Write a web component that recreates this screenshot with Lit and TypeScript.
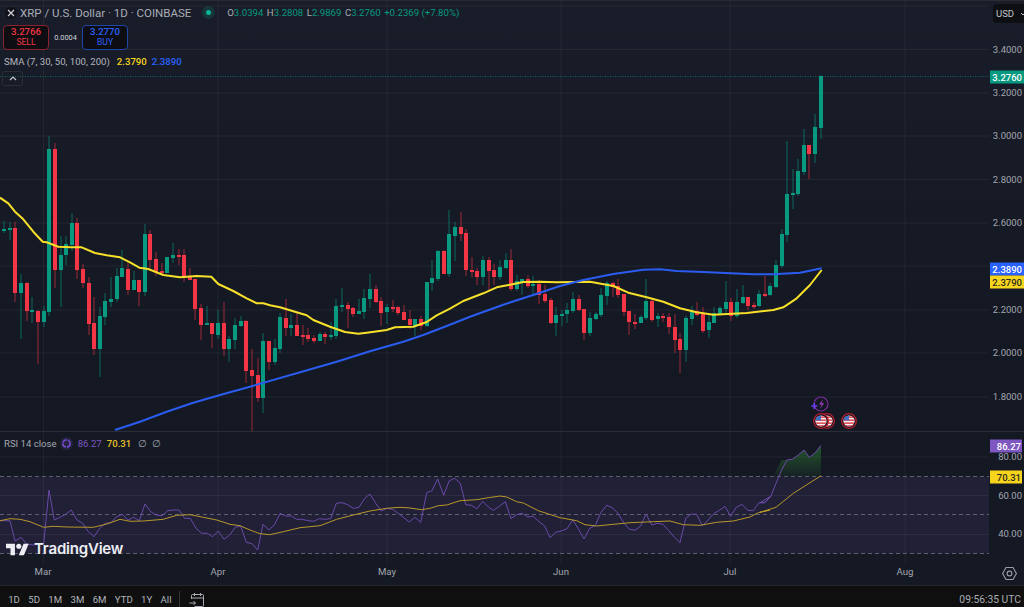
import { LitElement, html, css, svg } from "lit";
import { customElement } from "lit/decorators.js";

type C = [number, number, number, number, number, number];
// x, body top, body bottom, high, low, up(1)/down(0)
const CANDLES: C[] = [
[4,229,230,221,233,1],[10,228,229,222,240,1],[15,228,293,222,302,0],[21,283,293,274,339,1],[27,283,311,282,321,0],[32,310,311,297,323,1],[38,311,322,310,364,0],[44,311,322,306,327,1],[49,149,312,136,316,1],[55,149,270,143,288,0],[61,255,270,236,307,1],[66,244,255,236,265,1],[72,223,245,213,251,1],[77,223,270,218,279,0],[83,269,283,264,288,0],[89,283,324,277,335,0],[94,323,349,297,355,0],[100,316,349,307,377,1],[105,301,317,293,325,1],[111,299,302,277,307,1],[117,276,299,268,302,1],[122,268,277,250,277,1],[128,269,290,263,295,0],[134,280,290,271,290,1],[139,280,292,280,306,0],[145,234,292,224,296,1],[150,234,260,230,268,0],[156,259,272,252,276,0],[162,271,273,263,274,0],[167,257,273,257,273,1],[173,255,258,243,263,1],[179,255,256,249,265,0],[184,255,278,249,282,0],[190,277,280,268,280,0],[195,279,309,279,320,0],[201,308,325,304,340,0],[207,323,324,306,324,1],[212,323,334,323,348,0],[218,323,335,310,339,1],[224,323,349,302,356,0],[229,339,349,336,362,1],[235,325,340,318,349,1],[241,321,326,316,327,1],[246,321,371,320,383,0],[252,370,376,349,431,0],[258,375,398,358,402,0],[263,341,398,333,413,1],[269,341,362,341,370,0],
[275,348,362,339,365,1],[280,317,349,313,353,1],[286,318,328,299,336,0],[291,325,328,314,336,1],[297,325,336,313,336,0],[303,335,336,325,345,0],[308,335,339,328,342,0],[314,338,341,335,343,0],[320,334,341,332,341,1],[325,334,337,332,344,0],[331,335,337,322,340,1],[336,306,336,299,339,1],[342,305,307,288,312,1],[348,305,309,302,328,0],[353,308,314,307,317,0],[359,311,314,299,314,1],[364,298,312,289,319,1],[370,289,299,274,308,1],[376,289,302,285,303,0],[381,301,313,297,326,0],[387,307,312,304,324,1],[393,307,308,300,312,0],[398,307,313,306,315,0],[404,312,320,305,320,0],[410,319,325,310,329,0],[415,319,326,319,336,1],[421,319,326,316,330,0],[427,282,326,282,327,1],[432,278,283,260,291,1],[438,251,279,250,281,1],[444,251,274,250,274,0],[449,234,274,210,277,1],[455,227,236,222,261,1],[461,227,234,212,241,0],[466,233,270,229,276,0],[472,270,271,257,277,0],[477,271,277,268,285,0],[483,260,277,256,285,1],[489,260,271,257,291,0],[494,270,277,264,285,0],[500,267,277,260,280,1],[506,260,268,253,269,1],[511,260,289,249,291,0],[517,281,289,275,291,1],[522,279,282,279,295,1],[528,279,286,275,288,0],[533,284,286,276,294,1],[539,284,295,280,304,0],
[545,294,301,285,303,0],[551,300,323,298,324,0],[556,315,323,307,336,1],[562,314,315,310,326,1],[567,310,314,303,323,1],[573,299,311,292,313,1],[579,299,310,295,311,0],[584,309,333,309,340,0],[590,318,333,312,336,1],[596,314,319,312,320,1],[601,295,315,288,317,1],[607,283,296,281,305,1],[613,283,287,282,297,0],[618,286,295,279,298,0],[624,294,312,294,316,0],[629,311,322,311,335,0],[635,322,323,314,329,0],[641,317,323,315,323,1],[646,301,318,279,320,1],[652,301,320,298,322,0],[658,316,319,313,327,1],[663,316,318,313,322,0],[669,317,327,313,334,0],[675,327,340,314,353,0],[680,339,350,333,373,0],[686,318,350,316,362,1],[692,311,319,306,325,1],[697,311,315,302,316,0],[703,313,331,307,333,0],[709,322,330,313,338,1],[714,313,323,307,323,1],[720,308,314,306,315,1],[726,302,309,281,315,1],[731,302,316,298,321,0],[737,302,316,289,318,1],[743,297,303,285,304,1],[748,297,306,297,310,0],[754,305,306,302,309,0],[759,294,306,290,307,1],[765,294,295,276,297,0],[770,286,295,283,296,1],[776,265,287,260,288,1],[782,234,266,229,268,1],[787,194,235,141,242,1],[793,193,195,169,209,1],[798,171,194,159,196,1],[804,145,172,129,175,1],[809,145,154,145,179,0],[815,127,154,114,163,1],[821,76,128,75,139,1],
];

const conv = (pts: number[][], x0: number, y0: number) => pts.map(([x, y]) => [x / 3 + x0, y / 3 + y0]);
const toPath = (pts: number[][]) => pts.map(([x, y]) => `${x.toFixed(1)},${y.toFixed(1)}`).join(" ");

const SMA_Y = toPath([
  ...conv([[0,203],[25,220],[45,245],[70,268],[100,305],[128,335],[140,337],[175,350],[215,352],[245,352],[285,369],[320,376],[360,382],[390,397],[418,413],[445,417],[490,435],[540,442],[590,438],[634,440],[655,462],[700,483],[740,505],[770,520],[790,520]], 0, 130),
  ...conv([[0,316],[30,322],[70,334],[110,346],[130,360],[180,380],[225,396],[265,401],[290,398],[350,390],[375,382],[430,380],[470,366],[500,346],[540,326],[580,303],[640,280],[680,262],[720,254],[760,246]], 270, 200),
  ...conv([[0,245],[50,247],[150,245],[220,258],[265,278],[320,292],[370,305],[420,325],[470,337],[520,344],[620,339],[700,330],[730,322],[770,295],[810,255],[845,210]], 540, 200),
]);
const SMA_B = toPath([
  ...conv([[345,900],[420,875],[500,845],[580,818],[660,795],[750,770]], 0, 130),
  ...conv([[200,485],[300,454],[400,425],[460,405],[530,378],[600,350],[700,314]], 270, 200),
  ...conv([[0,278],[60,258],[130,240],[220,222],[310,209],[360,208],[410,213],[490,216],[640,223],[700,223],[780,218],[845,205]], 540, 200),
]);
const RSI_LINE = toPath([
  ...conv([[0,272],[30,272],[45,333],[63,322],[80,342],[100,345],[131,340],[147,180],[163,270],[180,262],[197,253],[214,240],[231,270],[248,280],[265,305],[282,320],[299,295],[316,280],[333,278],[350,260],[367,253],[384,270],[401,262],[418,272],[435,222],[452,245],[469,255],[486,257],[503,242],[520,240],[537,240],[554,265],[571,265],[588,295],[605,310],[622,310],[638,320],[655,303],[672,328],[689,315],[706,292],[722,288],[739,337],[756,341],[773,360],[789,282],[806,300],[823,285],[840,250],[857,258],[874,258],[890,268],[907,268],[924,272],[941,274],[958,266],[975,268],[992,266],[1009,220],[1026,218],[1043,224],[1060,235],[1077,232],[1094,205],[1110,192],[1127,220],[1144,243],[1161,235],[1178,238]], 0, 430),
  ...conv([[0,254],[28,276],[45,262],[62,277],[80,188],[96,182],[113,147],[131,196],[148,152],[164,145],[181,160],[197,224],[214,226],[231,236],[248,214],[265,231],[281,241],[299,228],[316,215],[333,266],[350,254],[366,250],[383,261],[400,259],[417,275],[434,288],[450,323],[467,307],[484,303],[501,296],[518,270],[535,296],[552,327],[569,295],[586,287],[603,247],[620,226],[637,233],[654,250],[671,278],[688,298],[705,301],[722,288],[738,252],[755,285],[772,280],[789,283],[806,302],[823,321],[840,338],[857,265],[874,252],[890,253],[907,287],[924,270],[941,251],[958,241],[975,229],[992,259],[1009,232],[1026,223],[1043,241],[1060,242],[1077,218],[1094,218],[1110,200]], 400, 430),
  ...conv([[0,368],[14,368],[32,350],[48,310],[65,270],[81,240],[97,238],[115,225],[132,210],[148,232],[166,218],[183,196]], 760, 380),
]);
const RSI_MA = toPath([
  ...conv([[0,272],[30,266],[60,268],[90,275],[131,292],[160,289],[200,291],[280,292],[320,282],[360,268],[390,274],[430,273],[490,268],[530,256],[570,254],[610,262],[650,270],[690,283],[720,287],[750,300],[780,311],[810,314],[850,305],[900,293],[960,287],[1010,268],[1060,255],[1110,243],[1160,235]], 0, 430),
  ...conv([[0,232],[30,234],[65,239],[90,235],[115,227],[140,225],[180,212],[230,209],[265,203],[300,198],[320,201],[350,215],[370,219],[415,242],[480,263],[530,272],[555,284],[590,288],[640,283],[690,278],[760,275],[810,273],[850,284],[900,286],[950,277],[1000,273],[1050,261],[1075,248],[1110,240]], 400, 430),
  ...conv([[0,397],[48,382],[100,340],[183,287]], 760, 380),
]);
const OB_FILL = "773.5,476.5 776,470.5 781.7,460 787,460 792,459 798.3,455 804,450 809.3,457.3 815.3,452.7 821,445.3 821,476.5";

const V_GRID = [43.5, 218, 387, 561, 730, 905];
const H_MAIN = [6, 49.5, 93, 136, 179.5, 223, 266, 310, 353, 397];
const H_RSI = [457, 495.5, 534.5];

const PRICE_LABELS: [string, number][] = [["3.4000",49.5],["3.2000",93],["3.0000",136],["2.8000",179.5],["2.6000",223],["2.2000",310],["2.0000",353],["1.8000",397]];
const PRICE_TAGS: [string, number, string][] = [["3.2760",77,"green"],["2.3890",269,"blue"],["2.3790",282,"yellow"]];
const RSI_LABELS: [string, number][] = [["80.00",457],["60.00",495.5],["40.00",534]];
const RSI_TAGS: [string, number, string][] = [["86.27",445.5,"purple"],["70.31",476.5,"yellow"]];
const MONTHS: [string, number][] = [["Mar",43],["Apr",218],["May",387],["Jun",561],["Jul",730],["Aug",905]];
const RANGES = ["1D","5D","1M","3M","6M","YTD","1Y","All"];

const flag = (cx: number, cy: number, id: string) => svg`
  <circle cx=${cx} cy=${cy} r="7.3" fill="#16121c" stroke="#b3202f" stroke-width="1.3"/>
  <clipPath id=${id}><circle cx=${cx} cy=${cy} r="5.6"/></clipPath>
  <g clip-path="url(#${id})">
    <rect x=${cx-6} y=${cy-6} width="12" height="12" fill="#f2f2f2"/>
    <rect x=${cx-6} y=${cy-4.6} width="12" height="1.5" fill="#e0434f"/>
    <rect x=${cx-6} y=${cy-1.6} width="12" height="1.5" fill="#e0434f"/>
    <rect x=${cx-6} y=${cy+1.4} width="12" height="1.5" fill="#e0434f"/>
    <rect x=${cx-6} y=${cy+4.2} width="12" height="1.5" fill="#e0434f"/>
    <rect x=${cx-6} y=${cy-6} width="6" height="5.4" fill="#3f6fc4"/>
  </g>`;

@customElement("app-root")
export class AppRoot extends LitElement {
  static styles = css`
    :host { display: block; position: relative; width: 1024px; height: 607px; overflow: hidden; background: #0f0f0f;
      font-family: Roboto, "Liberation Sans", sans-serif; color: #b2b5be; }
    .chart { position: relative; height: 585px; border-top: 1px solid #2a2b30; box-sizing: border-box;
      background: linear-gradient(180deg, #191d29 0%, #141823 60%, #151924 100%);
      display: flex; flex-direction: column; }
    .pane { display: flex; flex: none; position: relative; }
    .pane svg { display: block; flex: none; }
    .top { height: 430px; border-bottom: 1px solid #2a2e39; }
    .rsi { flex: 1; min-height: 0; }
    .timeaxis { height: 21px; flex: none; position: relative; }
    .scale { position: relative; flex: 1; font-size: 9.5px; }
    .lab { position: absolute; right: 2px; transform: translateY(-50%); line-height: 12px; color: #a3a6af; }
    .tag { position: absolute; left: 1px; right: 0; transform: translateY(-50%); height: 13px; line-height: 13px;
      text-align: right; padding-right: 2px; font-weight: 500; color: #fff; }
    .tag.green { background: #089981; }
    .tag.blue { background: #2962ff; }
    .tag.yellow { background: #f7d51d; color: #2a2a20; }
    .tag.purple { background: #7e57c2; right: 2px; padding-right: 1px; }
    .rsi .tag.yellow { right: 2px; padding-right: 1px; }
    .usd { position: absolute; top: 3px; right: 0; width: 31px; height: 19px; box-sizing: border-box; background: #0e0f12;
      border-radius: 4px 0 0 4px; display: flex; align-items: center; gap: 6px; padding-left: 3px; font-size: 9.5px; color: #c3c6ce; }
    .legend { position: absolute; left: 0; top: 0; display: flex; flex-direction: column; align-items: flex-start; }
    .title { display: flex; align-items: center; height: 25px; padding-left: 5px; font-size: 11.5px; color: #a9acb5; white-space: nowrap; }
    .xicon { width: 12px; height: 12px; margin-right: 3px; flex: none; }
    .dot { width: 13px; height: 13px; border-radius: 50%; background: rgba(8,153,129,.2); margin: 0 12px 0 11px; display: flex;
      align-items: center; justify-content: center; flex: none; }
    .dot i { width: 5px; height: 5px; border-radius: 50%; background: #08b598; display: block; }
    .ohlc { font-size: 9.6px; display: flex; gap: 3.5px; }
    .ohlc b { font-weight: 400; color: #089981; }
    .trade { display: flex; align-items: center; padding-left: 3px; height: 26px; margin-top: -1px; }
    .box { width: 46px; height: 25px; box-sizing: border-box; border-radius: 4px; background: #0e0e12; border: 1px solid; display: flex;
      flex-direction: column; align-items: center; justify-content: center; line-height: 11px; }
    .box .p { font-size: 9.6px; font-weight: 500; }
    .box .s { font-size: 8.6px; }
    .sell { border-color: #8a2231; color: #f23645; }
    .buy { border-color: #1f47a8; color: #2962ff; }
    .spread { width: 33px; text-align: center; font-size: 7.4px; color: #d1d4dc; }
    .sma { display: flex; gap: 5px; padding-left: 4px; height: 15px; align-items: center; margin-top: 4px; font-size: 9.6px; white-space: nowrap; }
    .sma .y { color: #f7d51d; font-weight: 500; }
    .sma .b { color: #2962ff; font-weight: 500; }
    .sma span:first-child { margin-right: 2px; }
    .collapse { width: 21px; height: 15px; margin: 2px 0 0 2px; box-sizing: border-box; border: 1px solid #2a2e39; border-radius: 3px;
      display: flex; align-items: center; justify-content: center; }
    .rsilegend { position: absolute; left: 4px; top: 5px; display: flex; align-items: center; font-size: 9.6px; white-space: nowrap; }
    .rsilegend .n { margin-right: 3px; color: #a3a6af; }
    .ring { width: 13px; height: 13px; margin-right: 5px; flex: none; }
    .v1 { color: #7e57c2; margin-right: 5px; }
    .v2 { color: #e6c229; font-weight: 500; margin-right: 7px; }
    .v3 { margin-right: 5px; color: #a3a6af; }
    .brand { position: absolute; left: 6px; bottom: 7px; display: flex; align-items: center; gap: 5px; color: #eceef2;
      font-family: Inter, Roboto, sans-serif; font-weight: 600; font-size: 15px; letter-spacing: -.2px; line-height: 16px; }
    .month { position: absolute; top: 2px; transform: translateX(-50%); font-size: 9.6px; color: #a3a6af; }
    .gear { position: absolute; right: 6px; top: 1px; width: 17px; height: 17px; }
    .bottom { height: 22px; box-sizing: border-box; display: flex; align-items: flex-end; padding: 0 3px 0 4px; font-size: 9.6px; color: #b2b5be;
      border-top: 1px solid #26272b; background: #0f0f0f; }
    .ranges { display: flex; }
    .ranges span { display: block; padding: 0 4.2px 1px; text-align: center; line-height: 13px; white-space: nowrap; }
    .sep { width: 1px; height: 16px; background: #34353a; margin-left: 3px; }
    .cal { width: 16px; height: 15px; margin-left: 9px; flex: none; }
    .clock { margin-left: auto; line-height: 13px; padding-bottom: 1px; font-size: 10.3px; color: #a9acb5; }
  `;

  private candles() {
    return CANDLES.map(([x, t, b, h, l, up]) => {
      const col = up ? "#089981" : "#f23645";
      return svg`<rect x=${x - 0.5} y=${h} width="1" height=${l - h} fill=${col} opacity=".62"/>
        <rect x=${x - 2} y=${t} width="4" height=${b - t + (b - t < 2 ? 1 : 0)} fill=${col}/>`;
    });
  }

  private scale(labels: [string, number][], tags: [string, number, string][], off: number) {
    return html`
      ${labels.map(([t, y]) => html`<div class="lab" style="top:${y - off}px">${t}</div>`)}
      ${tags.map(([t, y, c]) => html`<div class="tag ${c}" style="top:${y - off}px">${t}</div>`)}`;
  }

  render() {
    return html`
      <div class="chart">
        <div class="pane top">
          <svg width="989" height="430" viewBox="0 1 989 430">
            ${H_MAIN.map((y) => svg`<line x1="0" x2="989" y1=${y} y2=${y} stroke="#ffffff" stroke-opacity=".055"/>`)}
            ${V_GRID.map((x) => svg`<line x1=${x} x2=${x} y1="0" y2="431" stroke="#ffffff" stroke-opacity=".05"/>`)}
            <line x1="0" x2="989" y1="76.5" y2="76.5" stroke="#089981" stroke-opacity=".6" stroke-dasharray="1 1.5"/>
            ${this.candles()}
            <polyline points=${SMA_Y} fill="none" stroke="#f7e02a" stroke-width="2" stroke-linejoin="round"/>
            <polyline points=${SMA_B} fill="none" stroke="#2a5cf0" stroke-width="2" stroke-linejoin="round"/>
            <circle cx="821" cy="404" r="7" fill="none" stroke="#7b2a9c" stroke-width="1.2"/>
            <path d="M823 399.5l-4 5h2.6l-1.6 4 4.2-5.2h-2.6z" fill="#9c3cc4"/>
            <path d="M813.5 403v2.2h-2.2v1.6h2.2v2.2h1.6v-2.2h2.2v-1.6h-2.2V403z" fill="#6a3df0"/>
            ${flag(827, 421, "f1")}
            ${flag(821, 421, "f2")}
            ${flag(849, 421, "f3")}
          </svg>
          <div class="scale">
            ${this.scale(PRICE_LABELS, PRICE_TAGS, 1)}
            <div class="usd">USD
              <svg width="6" height="4" viewBox="0 0 6 4"><path d="M1 1l2 2 2-2" fill="none" stroke="#c3c6ce" stroke-width="1"/></svg>
            </div>
          </div>
        </div>
        <div class="pane rsi">
          <svg width="989" height="132" viewBox="0 432 989 132">
            <rect x="0" y="476.5" width="989" height="77" fill="#7e57c2" fill-opacity=".12"/>
            <defs><linearGradient id="ob" x1="0" y1="0" x2="0" y2="1">
              <stop offset="0" stop-color="#2e7d32" stop-opacity=".6"/><stop offset="1" stop-color="#2e7d32" stop-opacity=".08"/>
            </linearGradient></defs>
            ${H_RSI.map((y) => svg`<line x1="0" x2="989" y1=${y} y2=${y} stroke="#ffffff" stroke-opacity=".055"/>`)}
            ${V_GRID.map((x) => svg`<line x1=${x} x2=${x} y1="432" y2="564" stroke="#ffffff" stroke-opacity=".05"/>`)}
            ${[476.5, 514.5, 553.5].map((y) => svg`<line x1="0" x2="989" y1=${y} y2=${y} stroke="#787b86" stroke-opacity=".7" stroke-width="1" stroke-dasharray="4 3"/>`)}
            <polygon points=${OB_FILL} fill="url(#ob)"/>
            <polyline points=${RSI_LINE} fill="none" stroke="#6a4aa8" stroke-width="1" stroke-linejoin="round"/>
            <polyline points=${RSI_MA} fill="none" stroke="#b8982a" stroke-width="1" stroke-linejoin="round"/>
          </svg>
          <div class="scale">
            ${this.scale(RSI_LABELS, RSI_TAGS, 432)}
          </div>
          <div class="rsilegend">
            <span class="n">RSI 14 close</span>
            <svg class="ring" viewBox="0 0 13 13"><circle cx="6.5" cy="6.5" r="6.5" fill="#7e57c2" fill-opacity=".18"/><circle cx="6.5" cy="6.5" r="3.6" fill="none" stroke="#7a4fe0" stroke-width="1.4" stroke-dasharray="5 1"/></svg>
            <span class="v1">86.27</span><span class="v2">70.31</span><span class="v3">∅</span><span class="v3">∅</span>
          </div>
          <div class="brand">
            <svg width="23" height="13" viewBox="0 4 36 18"><path d="M14 22H7V11H0V4h14v18zM28 22h-8l7.5-18h8L28 22z" fill="#eceef2"/><circle cx="20" cy="8" r="4" fill="#eceef2"/></svg>
            <span>TradingView</span>
          </div>
        </div>
        <div class="timeaxis">
          ${MONTHS.map(([m, x]) => html`<div class="month" style="left:${x}px">${m}</div>`)}
          <svg class="gear" viewBox="0 0 17 17"><path d="M5 2.5h7l3.4 6-3.4 6H5l-3.4-6z" fill="none" stroke="#9a9da6" stroke-width="1.1"/><circle cx="8.5" cy="8.5" r="2.4" fill="none" stroke="#9a9da6" stroke-width="1.1"/></svg>
        </div>
      </div>
      <div class="bottom">
        <div class="ranges">${RANGES.map((r) => html`<span>${r}</span>`)}</div>
        <div class="sep"></div>
        <svg class="cal" viewBox="0 0 16 15" fill="none" stroke="#a9acb5" stroke-width="1"><path d="M2.5 7V3.5a1 1 0 0 1 1-1h10a1 1 0 0 1 1 1v10a1 1 0 0 1-1 1h-8M2.5 6h12M5.5 1v3M11.5 1v3M.5 11h6M4.5 9l2 2-2 2"/></svg>
        <div class="clock">09:56:35 UTC</div>
      </div>
      <div class="legend">
        <div class="title">
          <svg class="xicon" viewBox="0 0 12 12"><circle cx="6" cy="6" r="6" fill="#101218"/><path d="M3 3l6 6M9 3L3 9" stroke="#d1d4dc" stroke-width="1.2"/></svg>
          <span>XRP / U.S. Dollar · 1D · COINBASE</span>
          <span class="dot"><i></i></span>
          <span class="ohlc"><span>O<b>3.0394</b></span><span>H<b>3.2808</b></span><span>L<b>2.9869</b></span><span>C<b>3.2760</b></span><b>+0.2369 (+7.80%)</b></span>
        </div>
        <div class="trade">
          <div class="box sell"><span class="p">3.2766</span><span class="s">SELL</span></div>
          <div class="spread">0.0004</div>
          <div class="box buy"><span class="p">3.2770</span><span class="s">BUY</span></div>
        </div>
        <div class="sma"><span>SMA (7, 30, 50, 100, 200)</span><span class="y">2.3790</span><span class="b">2.3890</span></div>
        <div class="collapse"><svg width="8" height="5" viewBox="0 0 8 5"><path d="M1 4l3-3 3 3" fill="none" stroke="#c3c6ce" stroke-width="1.2"/></svg></div>
      </div>
    `;
  }
}
